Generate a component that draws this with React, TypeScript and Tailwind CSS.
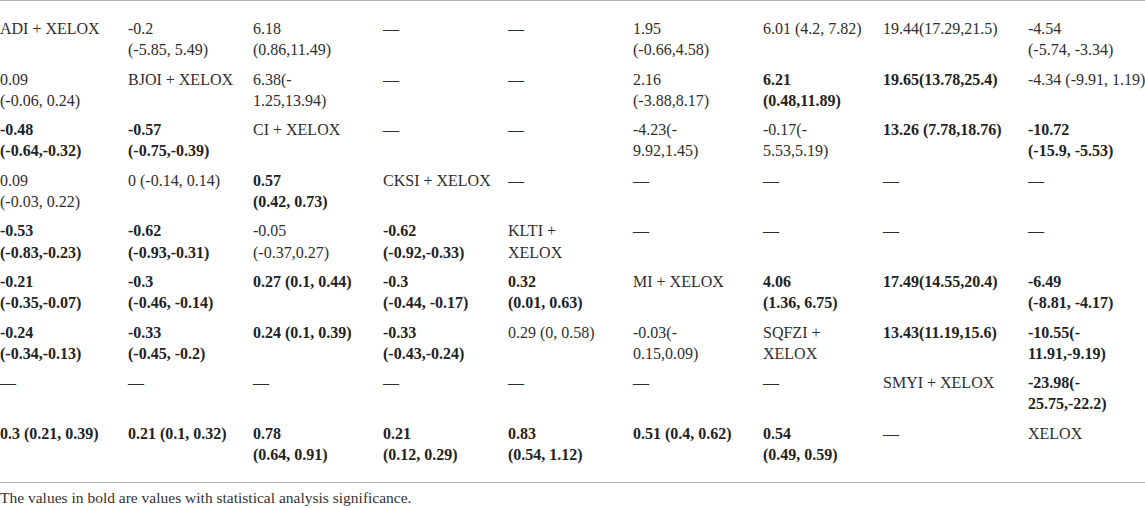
type Cell = { t: string[]; b?: boolean };

const c = (s: string, b = false): Cell => ({ t: s.split("|"), b });
const dash = c("—");

const rows: Cell[][] = [
  [
    c("ADI + XELOX"),
    c("-0.2|(-5.85, 5.49)"),
    c("6.18|(0.86,11.49)"),
    dash,
    dash,
    c("1.95|(-0.66,4.58)"),
    c("6.01 (4.2, 7.82)"),
    c("19.44(17.29,21.5)"),
    c("-4.54|(-5.74, -3.34)"),
  ],
  [
    c("0.09|(-0.06, 0.24)"),
    c("BJOI + XELOX"),
    c("6.38(-|1.25,13.94)"),
    dash,
    dash,
    c("2.16|(-3.88,8.17)"),
    c("6.21|(0.48,11.89)", true),
    c("19.65(13.78,25.4)", true),
    c("-4.34 (-9.91, 1.19)"),
  ],
  [
    c("-0.48|(-0.64,-0.32)", true),
    c("-0.57|(-0.75,-0.39)", true),
    c("CI + XELOX"),
    dash,
    dash,
    c("-4.23(-|9.92,1.45)"),
    c("-0.17(-|5.53,5.19)"),
    c("13.26 (7.78,18.76)", true),
    c("-10.72|(-15.9, -5.53)", true),
  ],
  [
    c("0.09|(-0.03, 0.22)"),
    c("0 (-0.14, 0.14)"),
    c("0.57|(0.42, 0.73)", true),
    c("CKSI + XELOX"),
    dash,
    dash,
    dash,
    dash,
    dash,
  ],
  [
    c("-0.53|(-0.83,-0.23)", true),
    c("-0.62|(-0.93,-0.31)", true),
    c("-0.05|(-0.37,0.27)"),
    c("-0.62|(-0.92,-0.33)", true),
    c("KLTI +|XELOX"),
    dash,
    dash,
    dash,
    dash,
  ],
  [
    c("-0.21|(-0.35,-0.07)", true),
    c("-0.3|(-0.46, -0.14)", true),
    c("0.27 (0.1, 0.44)", true),
    c("-0.3|(-0.44, -0.17)", true),
    c("0.32|(0.01, 0.63)", true),
    c("MI + XELOX"),
    c("4.06|(1.36, 6.75)", true),
    c("17.49(14.55,20.4)", true),
    c("-6.49|(-8.81, -4.17)", true),
  ],
  [
    c("-0.24|(-0.34,-0.13)", true),
    c("-0.33|(-0.45, -0.2)", true),
    c("0.24 (0.1, 0.39)", true),
    c("-0.33|(-0.43,-0.24)", true),
    c("0.29 (0, 0.58)"),
    c("-0.03(-|0.15,0.09)"),
    c("SQFZI +|XELOX"),
    c("13.43(11.19,15.6)", true),
    c("-10.55(-|11.91,-9.19)", true),
  ],
  [dash, dash, dash, dash, dash, dash, dash, c("SMYI + XELOX"), c("-23.98(-|25.75,-22.2)", true)],
  [
    c("0.3 (0.21, 0.39)", true),
    c("0.21 (0.1, 0.32)", true),
    c("0.78|(0.64, 0.91)", true),
    c("0.21|(0.12, 0.29)", true),
    c("0.83|(0.54, 1.12)", true),
    c("0.51 (0.4, 0.62)", true),
    c("0.54|(0.49, 0.59)", true),
    dash,
    c("XELOX"),
  ],
];

export default function App() {
  return (
    <div className="w-[1145px] h-[508px] bg-white text-[#2e2e2e] font-['Liberation_Serif',serif] overflow-hidden">
      <div className="border-t border-b border-[#b4b4b4] pt-[13px] pb-[13px]">
        <div className="grid grid-cols-[128px_125px_130px_125px_125px_130px_120px_145px_117px]">
          {rows.map((row, i) =>
            row.map((cell, j) => (
              <div
                key={`${i}-${j}`}
                className={`h-[50.6px] py-[4px] text-[16px] leading-[21.3px] whitespace-nowrap ${
                  cell.b ? "font-bold text-[#222]" : ""
                }`}
              >
                {cell.t.map((line, k) => (
                  <div key={k}>{line}</div>
                ))}
              </div>
            ))
          )}
        </div>
      </div>
      <p className="mt-[5px] text-[15.5px] leading-[20px] text-[#333]">
        The values in bold are values with statistical analysis significance.
      </p>
    </div>
  );
}
